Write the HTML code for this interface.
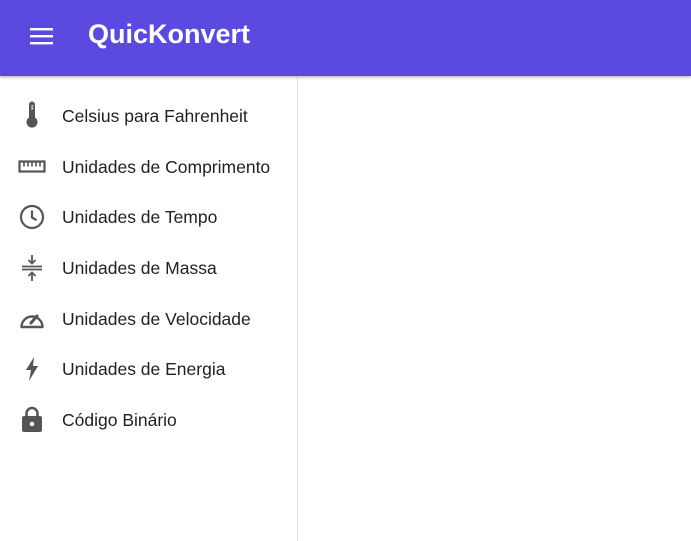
<!DOCTYPE html>
<html><head><style>
body{margin:0;width:691px;height:541px;overflow:hidden;background:#fff;font-family:"Liberation Sans",sans-serif;position:relative}
.hdr{position:absolute;left:0;top:0;width:691px;height:76px;background:#5b4ae0;box-shadow:0 1px 3px rgba(0,0,0,.35);z-index:2}
.menu{position:absolute;left:30px;top:28px}
.title{position:absolute;left:88px;top:19px;color:#fff;font-weight:bold;font-size:27px;letter-spacing:0}
.side{position:absolute;left:0;top:76px;width:297px;height:465px;border-right:1px solid #e0e0e0;background:#fff}
.item{position:absolute;left:0;width:297px;height:50px;}
.item svg{position:absolute;left:20px;top:13px}
.item span{position:absolute;left:62px;top:15px;font-size:17.5px;color:#222}
</style></head><body>
<div class="hdr">
<svg class="menu" width="24" height="18" viewBox="0 0 24 18"><rect x="0" y="0" width="23" height="2.4" fill="#fff"/><rect x="0" y="7" width="23" height="2.4" fill="#fff"/><rect x="0" y="14" width="23" height="2.4" fill="#fff"/></svg>
<div class="title">QuicKonvert</div>
</div>
<div class="side">
<div class="item" style="top:15px"><svg width="24" height="28" viewBox="0 0 24 28" style="top:10px"><path d="M9 3.5a3 3 0 0 1 6 0v13a5.5 5.5 0 1 1-6 0z" fill="#555"/><path d="M12 4v5M12 4.5h1.5M12 7h1.5" stroke="#fff" stroke-width=".8"/></svg><span>Celsius para Fahrenheit</span></div>
<div class="item" style="top:66px"><svg width="28" height="24" viewBox="0 0 28 24" style="left:18px"><rect x="1.5" y="6.5" width="25" height="10" fill="none" stroke="#555" stroke-width="2.2"/><path d="M6 7v4.5M10 7v4.5M14 7v4.5M18 7v4.5M22 7v4.5" stroke="#555" stroke-width="1.6"/></svg><span>Unidades de Comprimento</span></div>
<div class="item" style="top:116px"><svg width="26" height="26" viewBox="0 0 26 26" style="left:19px;top:12px"><circle cx="13" cy="13" r="11" fill="none" stroke="#555" stroke-width="2.2"/><path d="M13 6.5v7l4.5 2.7" fill="none" stroke="#555" stroke-width="2.2"/></svg><span>Unidades de Tempo</span></div>
<div class="item" style="top:167px"><svg width="24" height="28" viewBox="0 0 24 28" style="top:11px"><path d="M2 12.5h20M2 15.5h20" stroke="#555" stroke-width="1.8"/><path d="M12 1v8M8.5 6L12 9.5 15.5 6M12 27v-8M8.5 22L12 18.5l3.5 3.5" fill="none" stroke="#555" stroke-width="1.8"/></svg><span>Unidades de Massa</span></div>
<div class="item" style="top:218px"><svg width="28" height="24" viewBox="0 0 28 24" style="left:18px"><path d="M3.5 20a10.5 10.5 0 1 1 21 0z" fill="none" stroke="#555" stroke-width="2.4" stroke-linejoin="round"/><path d="M13 16l6-7" stroke="#555" stroke-width="3" stroke-linecap="round"/></svg><span>Unidades de Velocidade</span></div>
<div class="item" style="top:268px"><svg width="24" height="28" viewBox="0 0 24 28" style="top:11px"><path d="M14 2L6 15h5l-2 11 9-15h-5z" fill="#555"/></svg><span>Unidades de Energia</span></div>
<div class="item" style="top:319px"><svg width="24" height="28" viewBox="0 0 24 28" style="top:10px"><path d="M6.5 12V8.5a5.5 5.5 0 0 1 11 0V12" fill="none" stroke="#555" stroke-width="2.6"/><rect x="2" y="11" width="20" height="16" rx="2" fill="#555"/><circle cx="12" cy="19" r="2.2" fill="#fff"/></svg><span>Código Binário</span></div>
</div>
</body></html>
